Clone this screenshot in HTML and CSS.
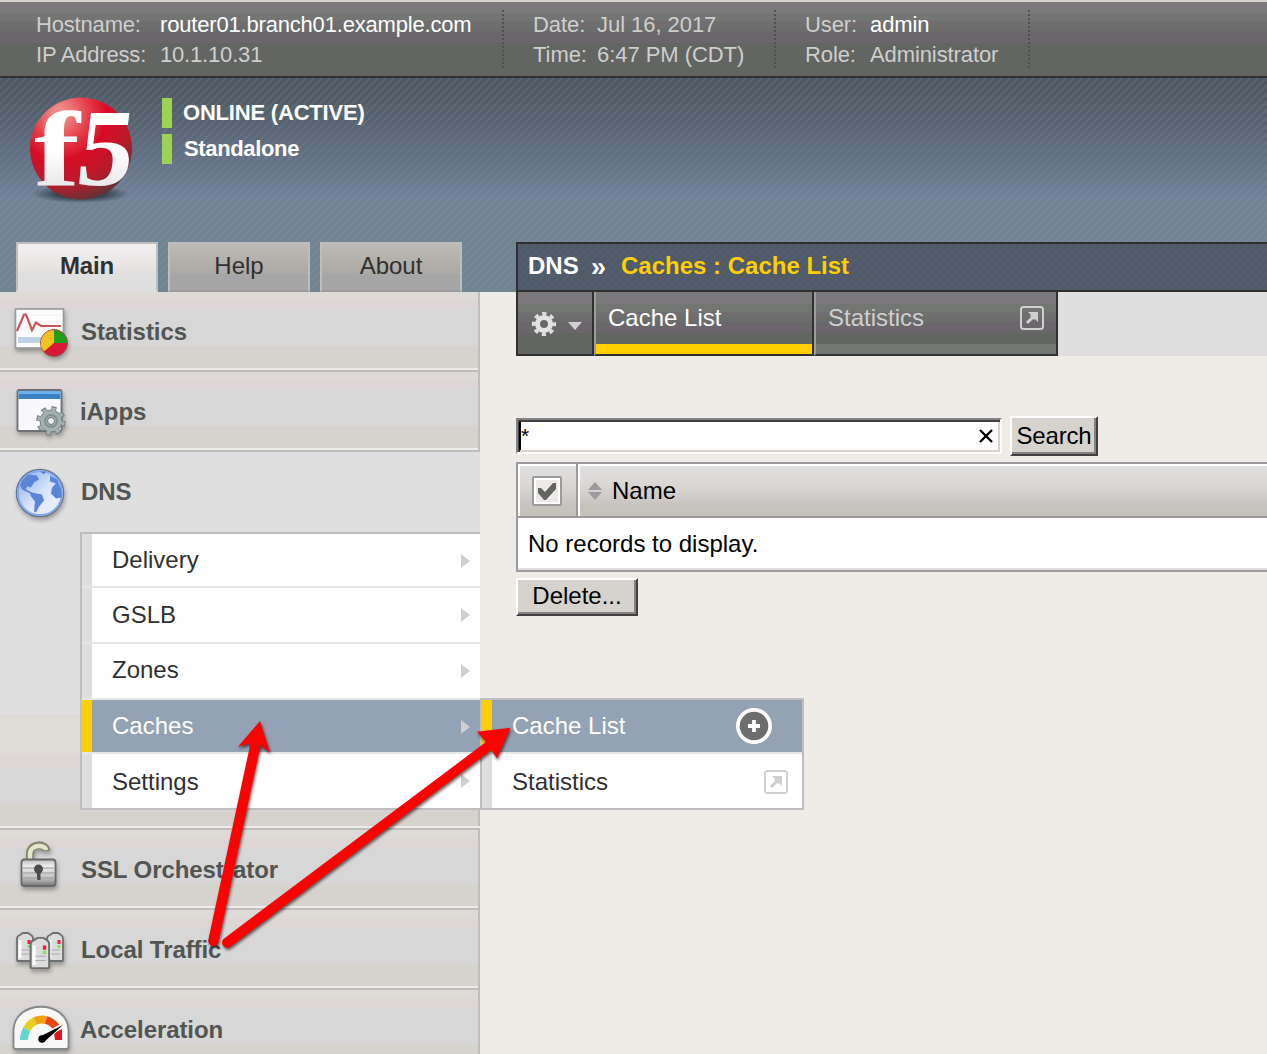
FILE: index.html
```html
<!DOCTYPE html>
<html lang="en">
<head>
<meta charset="utf-8">
<title>DNS : Caches : Cache List</title>
<link rel="stylesheet" href="styles.css">
</head>
<body>
<header class="topbar">
  <dl class="info host"><dt>Hostname:</dt><dd class="strong">router01.branch01.example.com</dd><dt>IP Address:</dt><dd>10.1.10.31</dd></dl>
  <dl class="info clock"><dt>Date:</dt><dd>Jul 16, 2017</dd><dt>Time:</dt><dd>6:47 PM (CDT)</dd></dl>
  <dl class="info account"><dt>User:</dt><dd class="strong">admin</dd><dt>Role:</dt><dd>Administrator</dd></dl>
</header>

<section class="banner">
  <div class="brand">
    <svg class="logo" width="112" height="112" viewBox="0 0 112 112" role="img" aria-label="f5">
      <defs>
        <radialGradient id="ball" cx="0.3" cy="0.16" r="0.9">
          <stop offset="0" stop-color="#f3a19b"/><stop offset="0.3" stop-color="#e4404b"/><stop offset="0.5" stop-color="#d90b27"/><stop offset="0.78" stop-color="#b51c2a"/><stop offset="1" stop-color="#5d3436"/>
        </radialGradient>
        <linearGradient id="mark" x1="0" y1="0" x2="0" y2="1"><stop offset="0.5" stop-color="#fff"/><stop offset="1" stop-color="#dcdcdc"/></linearGradient>
        <radialGradient id="ground"><stop offset="0" stop-color="#222b33"/><stop offset="0.5" stop-color="#2c363f" stop-opacity="0.8"/><stop offset="1" stop-color="#2c363f" stop-opacity="0"/></radialGradient>
      </defs>
      <ellipse cx="56" cy="101" rx="49" ry="9" fill="url(#ground)"/>
      <circle cx="56" cy="55.500" r="51" fill="url(#ball)"/>
      <text class="logo-f" transform="translate(9 92) scale(1.3 1)">f</text>
      <text class="logo-5" transform="translate(49 92) skewX(-7) scale(1.02 1)">5</text>
    </svg>
    <div class="status">
      <div class="status-row">ONLINE (ACTIVE)</div>
      <div class="status-row standalone">Standalone</div>
    </div>
  </div>
  <nav class="tabs"><a class="tab on">Main</a><a class="tab">Help</a><a class="tab">About</a></nav>
  <div class="crumb"><span>DNS</span><span class="sep">»</span><span class="path">Caches : Cache List</span></div>
</section>

<div class="page">
  <aside class="sidebar">
    <div class="item">
      <svg class="ico" width="60" height="60" viewBox="0 0 60 60">
        <rect x="5.500" y="5" width="48" height="39" fill="#fdfdfe" stroke="#96999d" stroke-width="1.600"/>
        <path d="M8 11H51M8 18H51M8 25H51" stroke="#eceff6"/>
        <path d="M8 33H42V39H8Z" fill="#bcd3ea"/>
        <path d="M7 27L14 10.500H16L22 26L26 18.500L31 22H51" fill="none" stroke="#d0505b" stroke-width="2.200"/>
        <circle cx="44" cy="39" r="13.500" fill="#d71836" stroke="#8d5b40"/>
        <path d="M44 39V26A13 13 0 0 1 57 39Z" fill="#20a01a"/>
        <path d="M44 39V26A13 13 0 0 0 34 47.500Z" fill="#f4c220"/>
      </svg><span>Statistics</span></div>
    <div class="item">
      <svg class="ico" width="60" height="60" viewBox="0 0 60 60">
        <rect x="7.500" y="6" width="44" height="41" rx="1.500" fill="#f9f9fc" stroke="#6d7277" stroke-width="1.800"/>
        <path d="M8.500 7H50.500V15H8.500Z" fill="#3b82c4"/><path d="M8.500 7H50.500V10H8.500Z" fill="#69b0ec"/>
        <g transform="translate(41 37)"><circle r="12.500" fill="none" stroke="#727c7d" stroke-width="4.500" stroke-dasharray="4.910 4.910"/><circle r="11" fill="#a4b1b1" stroke="#747f80"/><circle r="11.800" fill="none" stroke="#a4b1b1" stroke-width="4" stroke-dasharray="3.400 5.868" stroke-dashoffset="-0.620"/><circle r="6" fill="none" stroke="#839091" stroke-width="2"/><circle r="3.500" fill="#eee" stroke="#697273"/></g>
      </svg><span class="nudge">iApps</span></div>
    <div class="item open">
      <svg class="ico" width="60" height="60" viewBox="0 0 60 60">
        <defs><linearGradient id="sea" x1="0" y1="0" x2="1" y2="1"><stop offset="0" stop-color="#7da8ea"/><stop offset="0.55" stop-color="#dce6fb"/><stop offset="1" stop-color="#f5f7ff"/></linearGradient></defs>
        <g transform="translate(0 -1.500)">
        <circle cx="30" cy="30.500" r="23.500" fill="url(#sea)" stroke="#68768f" stroke-width="1.500"/>
        <circle cx="30" cy="30.500" r="22" fill="none" stroke="#84aaf0" stroke-width="1.800"/>
        <path d="M12 18L18 12L27 13L29 17L24 20L21 25L17 24L16 27L22 30L32 32L34 38L29 44L26 50L24 49L25 39L21 34L20 31L12 27L10 23Z" fill="#5b86d8"/>
        <path d="M30 9L36 9L34 12ZM40 13L47 17L51 26L52 35L46 36L41 31L42 25L46 21L40 19Z" fill="#5b86d8"/>
        </g>
      </svg><span>DNS</span>
      <ul class="menu">
        <li class="r1">Delivery</li><li class="r2">GSLB</li><li class="r3">Zones</li>
        <li class="r4 active">Caches
          <ul class="flyout">
            <li class="active">Cache List
              <svg class="add" width="38" height="38" viewBox="0 0 38 38"><circle cx="19" cy="19" r="18" fill="#fff"/><circle cx="19" cy="19" r="14.300" fill="#6d6d6d"/><path d="M19 13V25M13 19H25" stroke="#fff" stroke-width="3.800"/></svg></li>
            <li class="last">Statistics
              <svg class="ext" width="24" height="24" viewBox="0 0 24 24"><rect x="1" y="1" width="22" height="22" rx="2.500"/><path class="head" d="M8 6H18V16L15 13L14 14L10 10L11 9Z"/><path class="tail" d="M7 17L14 10"/></svg></li>
          </ul></li>
        <li class="r5">Settings</li>
      </ul>
    </div>
    <div class="item">
      <svg class="ico" width="60" height="60" viewBox="0 0 60 60">
        <defs><linearGradient id="steel" x1="0" y1="0" x2="0" y2="1"><stop offset="0" stop-color="#bbb"/><stop offset="0.25" stop-color="#eee"/><stop offset="0.7" stop-color="#c1c1c1"/><stop offset="1" stop-color="#737373"/></linearGradient></defs>
        <path d="M20 18V12C20 1 36 1 36.500 9" fill="none" stroke="#85856c" stroke-width="8"/><path d="M20 18V12C20 2 35.500 2 36 8" fill="none" stroke="#e5e5cd" stroke-width="4.500"/>
        <rect x="11.500" y="17.500" width="34" height="26.500" rx="3" fill="url(#steel)" stroke="#66696a" stroke-width="1.800"/>
        <path d="M13 26H44M13 31H44M13 36H44" stroke="#999" stroke-width="1"/>
        <circle cx="28.500" cy="27" r="4.500" fill="#4b4b4b"/><path d="M26.500 29H30.500V38H27.500Z" fill="#4b4b4b"/>
      </svg><span>SSL Orchestrator</span></div>
    <div class="item">
      <svg class="ico" width="60" height="60" viewBox="0 0 60 60">
        <g fill="#dcdcdc" stroke="#6e7070" stroke-width="1.800">
          <g id="srv"><path d="M7 17Q7 14 10 13L13 11H18L21 13Q23 14 23 17V38Q23 39 22 39H8Q7 39 7 38Z"/><path d="M10 18V36" stroke="#fff" stroke-width="3"/><path d="M11 28H20M11 32H20" stroke="#aaa" stroke-width="1"/><path d="M19 18V22" stroke="#ef2037" stroke-width="3"/><path d="M19 23V26" stroke="#83e35e" stroke-width="3"/></g>
          <use href="#srv" x="30"/><use href="#srv" transform="translate(12.500 4) scale(1.160 1.080)"/>
        </g>
      </svg><span>Local Traffic</span></div>
    <div class="item">
      <svg class="ico" width="60" height="60" viewBox="0 0 60 60">
        <path d="M3.500 45V28C5 -3 57 -3 58.500 28V45Q58.500 47 56 47H6Q3.500 47 3.500 45Z" fill="#f8f8f8" stroke="#85888b" stroke-width="1.800"/>
        <g fill="none" stroke-width="8"><path d="M14 38A17 19 0 0 1 17 27" stroke="#61d7d0"/><path d="M17 27A17 18 0 0 1 25 19" stroke="#e7cf20"/><path d="M25 19A18 18 0 0 1 36 18" stroke="#f2a114"/><path d="M36 18A18 18 0 0 1 46 25" stroke="#e54616"/></g>
        <path d="M44 31L52 27V38H45Z" fill="#e01520"/>
        <path d="M29 35L53 22L34 40Z" fill="#000" stroke="#f8f8f8" stroke-width="2.500"/><path d="M29 35L53 23L34 40Z"/><circle cx="32" cy="37" r="3.700"/>
      </svg><span class="nudge">Acceleration</span></div>
  </aside>

  <main class="content">
    <div class="subtabs">
      <div class="gear">
        <svg width="54" height="28" viewBox="0 0 54 28"><circle cx="13" cy="14" r="10.300" fill="none" stroke="#dedede" stroke-width="3.600" stroke-dasharray="4.200 3.891" stroke-dashoffset="2.100"/><circle cx="13" cy="14" r="6.500" fill="none" stroke="#e3e3e3" stroke-width="5"/><path d="M37 12H51L44 20Z" fill="#d0d0d0"/></svg>
      </div>
      <div class="subtab current">Cache List</div>
      <div class="subtab other">Statistics
        <svg class="ext light" width="24" height="24" viewBox="0 0 24 24"><rect x="1" y="1" width="22" height="22" rx="2.500"/><path class="head" d="M8 6H18V16L15 13L14 14L10 10L11 9Z"/><path class="tail" d="M7 17L14 10"/></svg></div>
      <div class="filler"></div>
    </div>
    <div class="search">
      <div class="field"><span>*</span><svg width="14" height="14" viewBox="0 0 14 14"><path d="M1 1L13 13M13 1L1 13" stroke="#000" stroke-width="2.400"/></svg></div>
      <button class="btn find">Search</button>
    </div>
    <div class="table">
      <div class="thead">
        <div class="check"><svg width="30" height="30" viewBox="0 0 30 30"><rect x="1" y="1" width="28" height="28" rx="1" fill="#fff" stroke="#9c9a9c" stroke-width="2"/><path d="M4 4H26V26H4Z" fill="#ece9e8"/><path d="M6 12H9L13 16L21 7H24V13L14 24H12L6 17Z" fill="#636563"/></svg></div>
        <div class="name"><svg width="14" height="18" viewBox="0 0 14 18"><path d="M0 8L7 0L14 8ZM0 10H14L7 18Z" fill="#9c9a9c"/></svg>Name</div>
      </div>
      <div class="empty">No records to display.</div>
    </div>
    <button class="btn delete">Delete...</button>
  </main>
</div>

<svg class="arrows" width="1267" height="1054" viewBox="0 0 1267 1054">
  <path d="M208.300 940L250.500 743.500L238 746.700L260 721L270 752.500L260.500 745.500L218.500 942A5.200 5.200 0 0 1 208.300 940Z"/>
  <path d="M223.500 939L486 742L477 731.700L510.500 727.700L497 758.500L491.500 750L230 947A5.200 5.200 0 0 1 223.500 939Z"/>
</svg>
</body>
</html>
```
FILE: styles.css
```css
* { box-sizing: border-box; }
body {
  margin: 0;
  width: 1267px;
  height: 1054px;
  overflow: hidden;
  position: relative;
  background: #efebe7;
  font: 24px "Liberation Sans", Arial, sans-serif;
  color: #000;
}
ul, dl, dd { margin: 0; padding: 0; list-style: none; }
svg { display: block; flex: none; }

/* Device information strip */
.topbar {
  height: 78px;
  display: flex;
  border-top: 2px solid #d9d3d0;
  border-bottom: 2px solid #313031;
  background: linear-gradient(#7b797b 0 12px, #737573 12px 19px, #706e70 19px 25px, #6b6d6b 25px 30px, #6b666b 30px 41px, #636563 41px);
  font-size: 22px;
  letter-spacing: -0.18px;
  color: #cecece;
}
.info {
  display: grid;
  align-content: start;
  grid-auto-rows: 30px;
  line-height: 30px;
  padding-top: 8px;
  white-space: nowrap;
  background: repeating-linear-gradient(#525152 0 2px, transparent 2px 4px) right 8px / 2px 58px no-repeat;
}
.host { width: 504px; padding-left: 36px; grid-template-columns: 124px 1fr; }
.clock { width: 272px; padding-left: 29px; grid-template-columns: 64px 1fr; letter-spacing: -0.05px; }
.account { width: 254px; padding-left: 29px; grid-template-columns: 65px 1fr; letter-spacing: -0.1px; }
.strong { color: #fff; }

/* Striped banner */
.banner {
  height: 214px;
  display: grid;
  grid-template: 164px 50px / 516px 1fr;
  background:
    repeating-linear-gradient(135deg, rgba(130, 145, 150, 0.18) 0 2px, rgba(70, 70, 100, 0.04) 2.5px 5.657px),
    linear-gradient(#4c5963 0, #57636f 40px, #66748a 85px, #74849a 120px, #728795 150px, #728693 214px);
}
.brand { grid-column: 1 / 3; display: flex; padding: 15px 0 0 25px; }
.logo { overflow: visible; }
.logo-f, .logo-5 { font: bold 110px "Liberation Serif", serif; fill: url(#mark); }
.logo-f { font-size: 106px; }
.status { padding: 5px 0 0 25px; display: grid; grid-template-rows: 30px 30px; gap: 6px; align-content: start; }
.status-row {
  border-left: 10px solid #9cd352;
  padding-left: 11px;
  font: bold 22px/29px "Liberation Sans", Arial, sans-serif;
  letter-spacing: -0.2px;
  color: #fff;
}
.standalone { padding-left: 12px; letter-spacing: -0.35px; }
.tabs { display: flex; gap: 10px; padding-left: 16px; }
.tab {
  width: 142px;
  height: 50px;
  text-align: center;
  line-height: 43px;
  border: 2px solid #bdbebd;
  border-bottom-color: #9c9a9c;
  background: linear-gradient(#bdb9b5 0, #ada9a5 29px, #a5a6a5 30px);
  color: #313031;
}
.tab.on {
  font-weight: bold;
  letter-spacing: -0.2px;
  border-bottom-color: #dedfde;
  background: linear-gradient(#f1eff1 0, #eae6e5 20px, #e4dfdc 29px, #dedfde 30px);
}
.crumb {
  display: flex;
  border: 2px solid #313031;
  border-right: 0;
  padding-left: 10px;
  font-weight: bold;
  line-height: 43px;
  color: #fff;
  background: repeating-linear-gradient(135deg, rgba(90, 110, 115, 0.3) 0 1.5px, transparent 2px 5.657px), #505a68;
}
.crumb span:first-child { width: 63px; }
.crumb .sep { width: 30px; line-height: 46px; font-size: 27px; }
.path { color: #ffcf00; }

.page { display: flex; height: 762px; }

/* Navigation */
.sidebar { width: 480px; flex: none; }
.item {
  height: 80px;
  display: flex;
  flex-wrap: wrap;
  align-content: start;
  padding-left: 10px;
  border-right: 2px solid #bdbebd;
  background:
    linear-gradient(#efebe7 0 2px, #bdbebd 2px) 0 100% / 100% 4px no-repeat,
    linear-gradient(#dedad6 0 8px, #ded6d6 9px 17px, #d6d7d6 18px 53px, #d6d3ce 55px);
}
.item > span {
  width: 380px;
  margin-left: 11px;
  font-weight: bold;
  line-height: 79px;
  letter-spacing: -0.08px;
  color: #525552;
}
.item > .nudge { margin-left: 10px; }
.ico { margin-top: 12px; overflow: visible; filter: drop-shadow(1px 3px 2px rgba(0, 0, 0, 0.3)); }
.item.open {
  height: 378px;
  border-right: 0;
  background:
    linear-gradient(#efebe7 0 2px, #bdbebd 2px) 0 100% / 100% 4px no-repeat,
    linear-gradient(#bdbebd, #bdbebd) 100% 100% / 2px 20px no-repeat,
    linear-gradient(#dedfde 0 262px, #dedad6 262px 304px, #ded6d6 306px 315px, #d6d7d6 316px 350px, #d6d3ce 352px);
}
.menu { width: 400px; margin: 1px 0 0 70px; border: 2px solid #bdbebd; border-right: 0; }
.menu li {
  position: relative;
  height: 56px;
  padding-left: 30px;
  line-height: 54px;
  box-shadow: inset 10px 0 #dedfde;
  border-bottom: 2px solid #e7e7e7;
  background: #fff;
  color: #313031;
}
.menu > li::after {
  content: "";
  position: absolute;
  right: 10px;
  top: 20px;
  border: solid transparent;
  border-width: 7px 0 7px 9px;
  border-left-color: #cecfce;
}
.menu .r1, .menu .r4 { height: 54px; line-height: 52px; }
.menu .r3 { line-height: 52px; }
.menu .r5, .menu .last { height: 54px; border-bottom: 0; line-height: 55px; }
.menu li.active { background: #94a2b5; box-shadow: inset 10px 0 #ffcf00; color: #fff; }

/* Second-level menu lies over the content area */
.flyout {
  position: absolute;
  left: 398px;
  top: -2px;
  z-index: 2;
  width: 324px;
  border: 2px solid #bdbebd;
}
.flyout li { display: flex; justify-content: space-between; align-items: center; height: 54px; }
.flyout .active { line-height: 52px; padding-right: 29px; }
.flyout .last { padding-right: 14px; }
.flyout .ext { margin-top: 2px; }
.ext { fill: none; stroke: #cecfce; stroke-width: 2; }
.ext .head { fill: #cecfce; stroke: none; }
.ext .tail { stroke-width: 3; }

/* Content */
.content { flex: 1; padding-left: 36px; }
.subtabs { display: flex; height: 64px; color: #cecfce; }
.gear, .subtab {
  border-bottom: 2px solid #313031;
  border-right: 2px solid #313031;
  background: linear-gradient(#7b797b 0 12px, #737573 12px 20px, #706e70 20px 25px, #6b6d6b 25px 30px, #6b666b 30px 41px, #636563 41px);
}
.gear { width: 78px; border-left: 2px solid #313031; padding: 18px 0 0 13px; }
.subtab { border-left: 2px solid #9c9e9c; padding: 0 12px; line-height: 51px; box-shadow: inset 0 -10px #737573; }
.current { width: 220px; color: #fff; box-shadow: inset 0 -10px #ffcf00; }
.other { width: 244px; display: flex; justify-content: space-between; }
.other .ext { margin-top: 14px; }
.filler { flex: 1; background: #dedfde; }

.search { display: flex; align-items: flex-start; gap: 8px; margin-top: 60px; height: 46px; }
.field {
  width: 486px;
  height: 36px;
  margin-top: 2px;
  display: flex;
  align-items: center;
  justify-content: space-between;
  padding-right: 7px;
  background: #fff;
  border: 2px solid #fff;
  border-top-color: #848284;
  border-left-color: #848284;
  box-shadow: inset 2px 2px #424142, inset -2px -2px #d6d3ce;
}
.field span { border-left: 2px solid #000; margin-left: 1px; line-height: 28px; height: 28px; font-size: 21px; }
.btn {
  display: block;
  padding: 0;
  font: 24px "Liberation Sans", Arial, sans-serif;
  color: #000;
  background: #d6d3ce;
  border: 2px solid #fff;
  border-right-color: #424142;
  border-bottom-color: #424142;
  box-shadow: inset -2px -2px #848284;
}
.find { width: 88px; height: 40px; letter-spacing: -0.15px; padding-bottom: 1px; }
.delete { width: 122px; height: 38px; margin-top: 6px; padding-bottom: 2px; }

.table { height: 110px; border: 2px solid #9c9a9c; border-right: 0; }
.thead { display: flex; height: 54px; border-bottom: 2px solid #9c9a9c; }
.check, .name {
  display: flex;
  align-items: center;
  border: solid #fff;
  border-width: 2px 0 0 2px;
  background: linear-gradient(#e1e1e1, #d9d6d2 40%, #cecac8 65%, #c6c3bd 80%);
}
.check { width: 58px; padding: 0 0 0 12px; }
.name { flex: 1; gap: 10px; padding: 0 0 0 8px; margin-left: 2px; box-shadow: -2px 0 #9c9a9c; }
.empty { height: 52px; padding-left: 10px; line-height: 51px; background: #fff; border-bottom: 2px solid #dedfde; }

/* Callout arrows lie over the whole screen */
.arrows {
  position: absolute;
  left: 0;
  top: 0;
  z-index: 5;
  pointer-events: none;
  fill: #f00;
  filter: drop-shadow(1px 2px 1.5px rgba(0, 0, 0, 0.6));
}
```
